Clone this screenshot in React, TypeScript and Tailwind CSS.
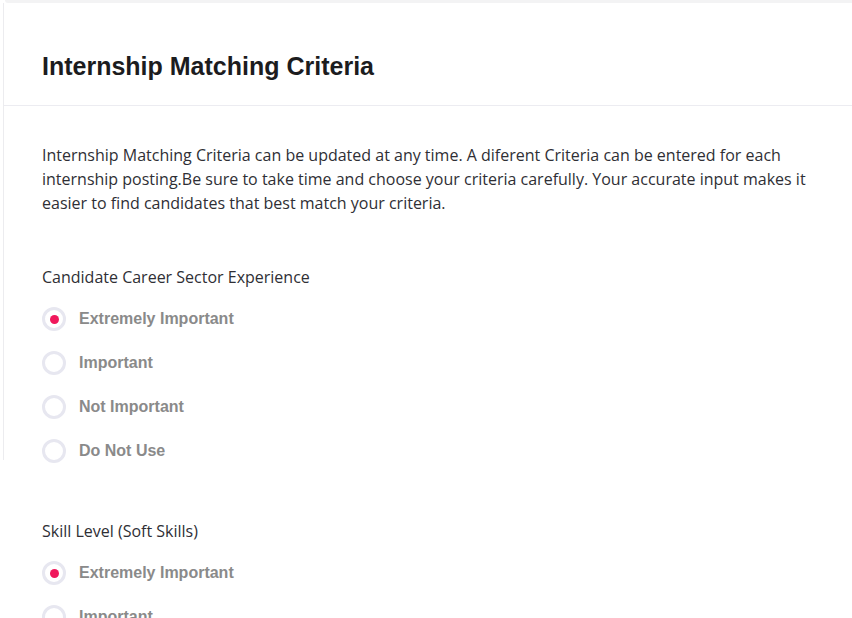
const options = ['Extremely Important', 'Important', 'Not Important', 'Do Not Use'];

function Radio({ label, checked }: { label: string; checked?: boolean }) {
  return (
    <label className="flex h-[44px] items-center gap-[13px]">
      <span className="flex size-[24px] items-center justify-center rounded-full border-[3px] border-[#e7e7f0] bg-white">
        {checked && <span className="size-[9px] rounded-full bg-[#f0185c]"></span>}
      </span>
      <span className="font-['Liberation_Sans',Arial,sans-serif] text-[16px] font-bold text-[#8a8a8a]">{label}</span>
    </label>
  );
}

function Criteria({ title, selected }: { title: string; selected: string }) {
  return (
    <div>
      <div className="h-[24px] font-['Open_Sans',sans-serif] text-[16px] leading-[24px] text-[#2f2f35]">{title}</div>
      <div className="mt-[8px] flex flex-col">
        {options.map((o) => (
          <Radio key={o} label={o} checked={o === selected} />
        ))}
      </div>
    </div>
  );
}

export default function App() {
  return (
    <div className="h-[618px] w-[852px] overflow-hidden bg-white">
      <div className="ml-[5px] h-[3px] rounded-bl-[3px] bg-[#f3f3f4]"></div>
      <div className="ml-[3px] h-[457px] border-l border-[#ececef]">
        <div className="h-[103px] border-b border-[#ececf1] pl-[38px] pt-[49px]">
          <h1 className="font-['Liberation_Sans',Arial,sans-serif] text-[25px] font-bold leading-[28px] text-[#1c1c1e]">
            Internship Matching Criteria
          </h1>
        </div>
        <div className="pl-[38px] pt-[37px]">
          <p className="max-w-[790px] font-['Open_Sans',sans-serif] text-[16px] leading-[24px] text-[#2f2f35]">
            Internship Matching Criteria can be updated at any time. A diferent Criteria can be entered for each internship posting.Be sure to take time and choose your criteria carefully. Your accurate input makes it easier to find candidates that best match your criteria.
          </p>
          <div className="mt-[50px]">
            <Criteria title="Candidate Career Sector Experience" selected="Extremely Important" />
          </div>
        </div>
      </div>
      <div className="pl-[42px] pt-[59px]">
        <Criteria title="Skill Level (Soft Skills)" selected="Extremely Important" />
      </div>
    </div>
  );
}
